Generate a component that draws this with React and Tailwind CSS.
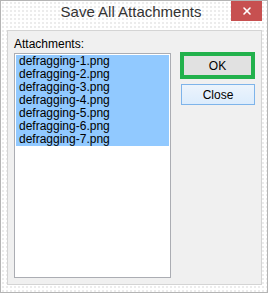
import { X } from 'lucide-react';

const files = [
  'defragging-1.png',
  'defragging-2.png',
  'defragging-3.png',
  'defragging-4.png',
  'defragging-5.png',
  'defragging-6.png',
  'defragging-7.png',
];

export default function App() {
  return (
    <div
      className="flex h-[293px] w-[268px] flex-col border border-[#b4b4b4] bg-white bg-[radial-gradient(#ececec_1px,transparent_1px)] bg-[size:4px_4px]"
      style={{ fontFamily: '"Liberation Sans", Arial, sans-serif' }}
    >
      {/* title bar */}
      <div className="flex h-[29px] items-start">
        <div className="flex h-[20px] flex-1 items-end justify-center pl-[30px] text-[15px] leading-[19px] text-[#333]">
          <span className="mt-[6px]">Save All Attachments</span>
        </div>
        <button className="mr-[5px] flex h-[20px] w-[31px] items-center justify-center bg-[#c75050] text-white" aria-label="Close">
          <X size={12} strokeWidth={3.2} />
        </button>
      </div>

      {/* client area */}
      <div className="ml-[6px] flex h-[255px] w-[255px] border border-[#d4d4d4] bg-[#f0f0f0] pl-[6px] pt-[6px]">
        <div className="flex flex-col">
          <div className="text-[12px] leading-[14px] text-black">Attachments:</div>
          <div className="mt-[2px] h-[225px] w-[157px] border border-[#abadb3] bg-white p-px">
            {files.map((f) => (
              <div key={f} className="h-[13px] bg-[#91c9ff] pl-[3px] text-[12px] leading-[13px] text-black">
                {f}
              </div>
            ))}
          </div>
        </div>

        <div className="ml-[9px] flex flex-col pt-[15px]">
          <button className="flex h-[27px] w-[75px] items-center justify-center border-4 border-[#22b14c] bg-[#e1e1e1] text-[12px] text-black">
            OK
          </button>
          <button className="ml-px mt-[5px] flex h-[21px] w-[74px] items-center justify-center border border-[#7eb4ea] bg-gradient-to-b from-[#ecf4fc] to-[#dcecfc] text-[12px] text-black">
            Close
          </button>
        </div>
      </div>
    </div>
  );
}
